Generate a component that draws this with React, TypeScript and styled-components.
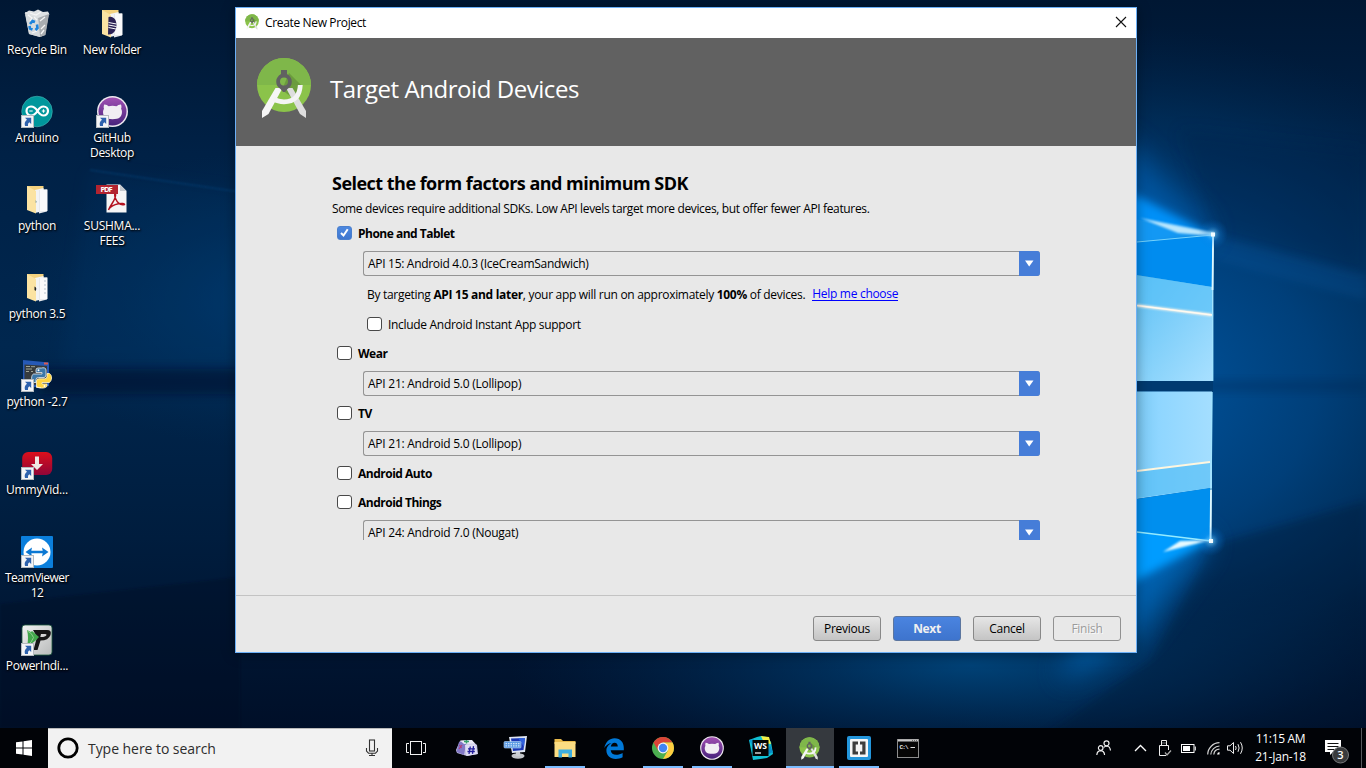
import React from "react";
import styled, { createGlobalStyle, css } from "styled-components";

const GlobalStyle = createGlobalStyle`
  html, body { margin: 0; padding: 0; }
  body {
    width: 1366px;
    height: 768px;
    overflow: hidden;
    font-family: "Open Sans", "Noto Sans", sans-serif;
    font-size: 12px;
    background: #00152f;
  }
  * { box-sizing: border-box; }
  svg { display: block; }
`;

/* ---------- Desktop ---------- */

const Screen = styled.div`
  position: relative;
  width: 1366px;
  height: 768px;
  display: flex;
  flex-direction: column;
  overflow: hidden;
`;

const WallpaperLayer = styled.div`
  position: absolute;
  inset: 0;
  z-index: 0;
`;

const Desktop = styled.main`
  position: relative;
  z-index: 1;
  flex: 1;
  padding-top: 7px;
`;

const IconGrid = styled.div`
  display: flex;
  width: 150px;
`;

const IconColumn = styled.div`
  display: flex;
  flex-direction: column;
  width: 75px;
`;

const Shortcut = styled.div`
  height: 88px;
  width: 74px;
  display: flex;
  flex-direction: column;
  align-items: center;
`;

const ShortcutIcon = styled.div`
  width: 34px;
  height: 35px;
`;

const ShortcutLabel = styled.span<{ $ls?: number }>`
  color: #fff;
  font-size: 12px;
  line-height: 15px;
  letter-spacing: ${(p) => p.$ls ?? -0.25}px;
  text-align: center;
  white-space: pre;
  text-shadow: 1px 1px 2px #000, 0 1px 2px rgba(0, 0, 0, 0.8);
`;

const Text = styled.span<{ $ls?: number }>`
  letter-spacing: ${(p) => p.$ls ?? -0.35}px;
  white-space: pre;
`;

/* ---------- Dialog ---------- */

const Dialog = styled.section`
  position: absolute;
  left: 235px;
  top: 7px;
  width: 902px;
  height: 646px;
  border: 1px solid #6cb0f7;
  background: #e8e8e8;
  display: flex;
  flex-direction: column;
  box-shadow: 0 1px 12px rgba(0, 0, 0, 0.35);
`;

const TitleBar = styled.div`
  height: 30px;
  background: #fff;
  display: flex;
  align-items: center;
  padding: 0 9px 2px 9px;
  color: #000;
`;

const TitleText = styled(Text)`
  flex: 1;
  margin-left: 6px;
`;

const Banner = styled.header`
  height: 108px;
  background: #616161;
  display: flex;
  align-items: flex-start;
  padding: 19px 0 0 20px;
`;

const BannerTitle = styled.h1`
  margin: 15px 0 0 18px;
  color: #fff;
  font-size: 24px;
  line-height: 34px;
  font-weight: 400;
  letter-spacing: -0.45px;
  white-space: pre;
`;

const Content = styled.div`
  height: 449px;
  padding: 26px 96px 0 96px;
  color: #000;
`;

const FormPane = styled.div`
  height: 368px;
  overflow: hidden;
`;

const Heading = styled.h2`
  margin: 0;
  font-size: 18px;
  font-weight: 700;
  line-height: 23px;
  letter-spacing: -0.52px;
  white-space: pre;
`;

const Subtitle = styled.p`
  margin: 5px 0 5px;
  line-height: 18px;
  letter-spacing: -0.35px;
  white-space: pre;
`;

const CheckRow = styled.label<{ $top?: number; $indent?: number; $bold?: boolean }>`
  display: flex;
  align-items: center;
  height: 20px;
  margin-top: ${(p) => p.$top ?? 0}px;
  padding-left: ${(p) => p.$indent ?? 5}px;
  font-weight: ${(p) => (p.$bold ? 700 : 400)};
  gap: 6px;
`;

const CheckBox = styled.span<{ $on?: boolean }>`
  width: 15px;
  height: 14px;
  border-radius: 3px;
  border: 1px solid ${(p) => (p.$on ? "#4a7fcd" : "#484848")};
  background: ${(p) => (p.$on ? "linear-gradient(#4c88e0, #3f77cf)" : "#fff")};
`;

const Select = styled.div`
  display: flex;
  justify-content: space-between;
  width: 677px;
  height: 25px;
  margin: 8px 0 0 31px;
  border: 1px solid #949494;
  border-right: 0;
  border-radius: 3px;
  padding-left: 4px;
  line-height: 24px;
`;

const SelectArrow = styled.span`
  width: 21px;
  height: 25px;
  margin-top: -1px;
  border-radius: 0 3px 3px 0;
  background: #467dd8;
  display: flex;
  align-items: center;
  padding-left: 6px;
`;

const Hint = styled.div`
  display: flex;
  align-items: flex-start;
  height: 20px;
  margin: 9px 0 0 35px;
  line-height: 19px;
`;

const HelpLink = styled.a`
  margin: 2px 0 0 7px;
  color: #0000ff;
  line-height: 14px;
  height: 14px;
  border-bottom: 1px solid #0000ff;
  white-space: pre;
`;

const Footer = styled.footer`
  flex: 1;
  border-top: 1px solid #c3c3c3;
  display: flex;
  justify-content: flex-end;
  gap: 12px;
  padding: 20px 15px 0 0;
`;

const Button = styled.button<{ $kind?: "primary" | "disabled" }>`
  width: 68px;
  height: 25px;
  padding: 0 0 1px;
  border: 1px solid #888;
  border-radius: 3px;
  font: 400 12px "Open Sans", "Noto Sans", sans-serif;
  color: #000;
  background: linear-gradient(#e6e6e6, #c4c4c4);
  ${(p) =>
    p.$kind === "primary" &&
    css`
      background: linear-gradient(#4a84e0, #3e74cd);
      border-color: #5c769f;
      color: #f0f0f0;
      font-weight: 700;
    `}
  ${(p) =>
    p.$kind === "disabled" &&
    css`
      background: transparent;
      border-color: #919191;
      color: #9b9b9b;
      text-shadow: 1px 1px 0 #fafafa;
    `}
`;

/* ---------- Taskbar ---------- */

const Taskbar = styled.nav`
  position: relative;
  z-index: 2;
  height: 40px;
  background: #010307;
  display: flex;
`;

const TaskCell = styled.div`
  width: 48px;
  height: 40px;
  display: flex;
  align-items: center;
  justify-content: center;
`;

const SearchBox = styled.div`
  width: 344px;
  height: 40px;
  background: #f2f2f2;
  border-top: 1px solid #b9b9b9;
  display: flex;
  align-items: center;
  padding: 0 13px 1px 8px;
`;

const SearchText = styled.span`
  flex: 1;
  margin-left: 8px;
  color: #2d2d2d;
  font-size: 14px;
  letter-spacing: -0.05px;
`;

const Apps = styled.div`
  display: flex;
  gap: 1px;
  margin-left: 3px;
`;

const AppCell = styled(TaskCell)<{ $state?: "open" | "active" }>`
  position: relative;
  padding-right: 1px;
  background: ${(p) => (p.$state === "active" ? "#35393e" : "transparent")};
  ${(p) =>
    p.$state &&
    css`
      &::after {
        content: "";
        position: absolute;
        bottom: 0;
        left: ${p.$state === "active" ? 0 : 4}px;
        right: ${p.$state === "active" ? 0 : 4}px;
        height: 2px;
        background: #7bbcff;
      }
    `}
`;

const Tray = styled.div`
  margin-left: auto;
  display: flex;
  align-items: center;
`;

const TrayItem = styled.div<{ $w: number }>`
  width: ${(p) => p.$w}px;
  display: flex;
  justify-content: center;
`;

const Clock = styled.div`
  width: 66px;
  display: flex;
  flex-direction: column;
  align-items: center;
  color: #fff;
  line-height: 18px;
  padding-left: 1px;
`;

const ShowDesktop = styled.div`
  width: 5px;
  height: 40px;
  border-left: 1px solid #55585c;
`;

/* ---------- Drawings ---------- */

const Wallpaper = () => (
  <svg width="1366" height="768" viewBox="0 0 1366 768">
    <defs>
      <linearGradient id="wBase" x1="0" y1="0" x2="0" y2="1">
        <stop offset="0" stopColor="#001733" />
        <stop offset="0.2" stopColor="#002146" />
        <stop offset="0.45" stopColor="#00274f" />
        <stop offset="0.7" stopColor="#001d3e" />
        <stop offset="0.95" stopColor="#000f28" />
      </linearGradient>
      <radialGradient id="wGlow" gradientUnits="userSpaceOnUse" cx="0" cy="0" r="1" gradientTransform="translate(1110 385) scale(460 360)">
        <stop offset="0" stopColor="#0058a5" />
        <stop offset="0.45" stopColor="#004482" stopOpacity="0.85" />
        <stop offset="0.75" stopColor="#003768" stopOpacity="0.5" />
        <stop offset="1" stopColor="#002850" stopOpacity="0" />
      </radialGradient>
      <radialGradient id="wLeft" gradientUnits="userSpaceOnUse" cx="0" cy="0" r="1" gradientTransform="translate(280 300) scale(270 150)">
        <stop offset="0" stopColor="#003e74" stopOpacity="0.8" />
        <stop offset="1" stopColor="#00305c" stopOpacity="0" />
      </radialGradient>
      <radialGradient id="wBottom" gradientUnits="userSpaceOnUse" cx="0" cy="0" r="1" gradientTransform="translate(970 665) scale(460 120)">
        <stop offset="0" stopColor="#004880" stopOpacity="0.85" />
        <stop offset="1" stopColor="#003060" stopOpacity="0" />
      </radialGradient>
      <linearGradient id="paneTop" x1="0" y1="0" x2="1" y2="1">
        <stop offset="0" stopColor="#5cc0f5" />
        <stop offset="1" stopColor="#a8e0ff" />
      </linearGradient>
      <linearGradient id="paneLow" x1="0" y1="0" x2="1" y2="0">
        <stop offset="0" stopColor="#74c6f2" />
        <stop offset="0.35" stopColor="#8fd6ff" />
        <stop offset="1" stopColor="#a4deff" />
      </linearGradient>
      <radialGradient id="flare">
        <stop offset="0" stopColor="#dff6ff" stopOpacity="0.9" />
        <stop offset="0.2" stopColor="#6cc9ff" stopOpacity="0.5" />
        <stop offset="0.5" stopColor="#1890f0" stopOpacity="0.25" />
        <stop offset="1" stopColor="#0078e0" stopOpacity="0" />
      </radialGradient>
      <filter id="b1" x="-50%" y="-50%" width="200%" height="200%"><feGaussianBlur stdDeviation="1.2" /></filter>
      <filter id="b4" x="-50%" y="-50%" width="200%" height="200%"><feGaussianBlur stdDeviation="4" /></filter>
      <filter id="b8" x="-50%" y="-50%" width="200%" height="200%"><feGaussianBlur stdDeviation="8" /></filter>
      <filter id="b14" x="-50%" y="-50%" width="200%" height="200%"><feGaussianBlur stdDeviation="14" /></filter>
    </defs>
    <rect width="1366" height="768" fill="url(#wBase)" />
    <rect width="700" height="768" fill="url(#wLeft)" />
    <rect width="1366" height="768" fill="url(#wGlow)" />
    <rect x="400" y="540" width="966" height="228" fill="url(#wBottom)" />
    <path d="M90 170 L240 192 V366 H60 Z" fill="#003c74" opacity="0.15" filter="url(#b8)" />
    <path d="M90 170 L240 192" stroke="#0a4f8c" strokeWidth="1.500" opacity="0.4" filter="url(#b1)" />
    <path d="M40 369 H240 V394 H40 Z" fill="#001029" opacity="0.5" filter="url(#b4)" />
    <path d="M60 597 L240 577 V728 H0 V604 Z" fill="#000d24" opacity="0.35" filter="url(#b1)" />
    <path d="M1213 234 L1366 275 V150 L1180 130 Z" fill="#001f42" opacity="0.28" filter="url(#b8)" />
    <path d="M1213 235 L1366 275 V300 L1213 260 Z" fill="#0a5ca5" opacity="0.22" filter="url(#b4)" />
    <path d="M1211 545 L1366 501 V768 H1000 L1150 660 Z" fill="#001630" opacity="0.35" filter="url(#b4)" />
    <path d="M1137 380 H1366 V392 H1137 Z" fill="#00234a" opacity="0.25" filter="url(#b4)" />
    <path d="M1060 100 L1137 150 L1213 234 L1137 250 Z" fill="#0068c0" opacity="0.6" filter="url(#b14)" />
    <path d="M1060 680 L1137 640 L1211 541 L1137 520 Z" fill="#0078d4" opacity="0.65" filter="url(#b14)" />
    <path d="M1080 175 L1137 196 L1211 234 L1137 250 Z" fill="#0090f8" filter="url(#b4)" />
    <path d="M1080 630 L1137 580 L1210 541 L1137 520 Z" fill="#009cff" filter="url(#b4)" />
    <path d="M1130 242 L1212 235 V288 L1130 274 Z" fill="#008cef" />
    <path d="M1130 218 L1212 235 L1130 243 Z" fill="#1f9ff2" opacity="0.6" />
    <path d="M1130 274 L1212 287 V381 H1130 Z" fill="url(#paneTop)" />
    <path d="M1130 274 L1212 287 V314 L1130 304 Z" fill="#55bff8" opacity="0.6" />
    <path d="M1137 305.500 L1212 315" stroke="#fff5e8" strokeWidth="2.500" filter="url(#b1)" />
    <path d="M1137 305.500 L1212 315" stroke="#fffaf0" strokeWidth="1.500" />
    <path d="M1137 242 L1213 235" stroke="#8ee2ff" strokeWidth="1" opacity="0.8" />
    <path d="M1140 218 L1213 232.500 V236 L1178 233 Z" fill="#d6f4ff" opacity="0.85" filter="url(#b1)" />
    <rect x="1130" y="381" width="83" height="10.500" fill="#003a70" />
    <path d="M1130 391.500 H1212 V488 L1130 500 Z" fill="url(#paneLow)" />
    <path d="M1130 471 L1210 462 V488 L1130 499 Z" fill="#4dbaf5" opacity="0.6" />
    <path d="M1130 500 L1210 488 V541 L1130 531 Z" fill="#008fee" />
    <path d="M1137 471 L1210 462" stroke="#fff6df" strokeWidth="2" />
    <path d="M1137 532 L1211 541" stroke="#94ebff" strokeWidth="1.300" />
    <path d="M1163 552 L1211 540 L1180 541 Z" fill="#e6faff" filter="url(#b1)" />
    <path d="M1212.700 234 V381 M1212 392 L1210.500 541" stroke="#a2e4ff" strokeWidth="1.400" />
    <path d="M1213.200 234 L1212.500 290 M1210.500 541 L1211 490" stroke="#dff8ff" strokeWidth="1.800" />
    <circle cx="1213" cy="234" r="15" fill="url(#flare)" />
    <circle cx="1211" cy="541" r="15" fill="url(#flare)" />
    <rect x="1211" y="232.500" width="4" height="4" fill="#f2fcff" />
    <rect x="1209" y="539" width="4" height="4" fill="#f2fcff" />
  </svg>
);

const LinkArrow = () => (
  <g>
    <rect x="1.500" y="20.500" width="12" height="12" fill="#f4f5f7" stroke="#b5babf" />
    <path d="M5 22.800 H11.200 V29 L9.300 27.200 Q7.500 28.300 8 31 H5 Q3.800 27 7 24.800 Z" fill="#2e62ad" />
  </g>
);

const IconFrame = ({ children }: { children: React.ReactNode }) => (
  <svg width="34" height="35" viewBox="0 0 34 35">{children}</svg>
);

const RecycleBinIcon = () => (
  <IconFrame>
    <path d="M5 5 L29 6 L25 28 L20 30 L9 27 Z" fill="#c9cdd0" />
    <path d="M4.500 6.500 L9 3.500 L14 4.500 L18 2.500 L23 5 L28 4.500 L29.500 7.500 L18 12 Z" fill="#dfe2e4" />
    <path d="M18 11 L29 7 L25.500 28 L20 30 Z" fill="#a9adb1" />
    <path d="M5 7 L18 11 L20 30 L9 27 Z" fill="#d6dadc" />
    <path d="M8 8 L12 11 L10 14 M14 10 L17 13 M12 26 L17 24 M20 14 L25 10 M21 22 L25 18 M21 27 L24 23 M10 6 L16 8 L21 5" stroke="#f6f6f6" strokeWidth="1.300" fill="none" />
    <path d="M10 17 L12.500 14 L15 15 M17 17.500 L17.500 21 L15.500 23 M12.500 22.500 L10 21.500 L9.500 19" fill="none" stroke="#1c83dc" strokeWidth="2.600" />
  </IconFrame>
);

const Folder = ({ kind }: { kind: "eclipse" | "plain" | "dot" }) => (
  <IconFrame>
    <path d="M7 3 H23.500 V27 H7 Z" fill="#f4d27f" />
    <path d="M15 7 L23.500 5 V28 L15 30 Z" fill="#f2f3f5" />
    <path d="M19 7 L27 6.500 V28.500 L19 30.500 Z" fill="#e6e8ec" />
    <path d="M20 6.500 H27.500 V28 H20 Z" fill="#fafafb" />
    <path d="M7 3 L16 8 V30.500 L7 27 Z" fill="#fbe3a2" />
    {kind === "eclipse" && (
      <>
        <path d="M13.500 10 C18.500 8.500 21.500 13 21.500 18 C21.500 23 18.500 28 13 27.500 Z" fill="#2c2255" />
        <path d="M13.500 15.500 L21.500 17 M13.500 18 L21.500 19.500 M13.500 20.500 L21 22" stroke="#fff" strokeWidth="1" />
      </>
    )}
    {kind === "plain" && <path d="M15.500 17 L17 19 L15.500 20 Z" fill="#8fa5a0" />}
    {kind === "dot" && <path d="M14.500 15.500 Q17.500 17 15.500 20 L14.500 19 Z" fill="#222" />}
    {kind === "dot" && <path d="M25 9 V25" stroke="#b6c1cc" strokeDasharray="2 2" />}
  </IconFrame>
);

const ArduinoIcon = () => (
  <IconFrame>
    <circle cx="17" cy="16.500" r="15.300" fill="#00979c" stroke="#4cb5b4" strokeWidth="0.600" />
    <path d="M17.500 16 C15 12 13 11.500 11 11.500 A4.400 4.400 0 0 0 11 20.500 C13.500 20.500 15.500 19 17.500 16 C19.500 12.500 21.500 11.500 23.500 11.500 A4.400 4.400 0 0 1 23.500 20.500 C21 20.500 19.500 19 17.500 16 Z" fill="none" stroke="#fff" strokeWidth="2.200" />
    <path d="M9.300 16 H12.700 M21.800 16 H25.200 M23.500 14.300 V17.700" stroke="#fff" strokeWidth="1.200" />
    <LinkArrow />
  </IconFrame>
);

const CatHead = () => (
  <path d="M9.200 9.500 C11 9.300 12.700 10.400 13.600 11.200 Q17.500 10.400 21.500 11.200 C22.600 10.400 24.300 9.300 26 9.500 C26.700 11.500 26.500 12.700 26.100 13.700 C28 16.500 27 22.800 22 23.700 Q17.500 24.600 13 23.700 C8 22.800 7 16.500 9 13.700 C8.600 12.700 8.500 11.500 9.200 9.500 Z" fill="#f1eef3" />
);

const GithubIcon = ({ link, size = 34 }: { link?: boolean; size?: number }) => (
  <svg width={size} height={link ? 35 : size} viewBox={link ? "0 0 34 35" : "0.5 -0.5 34 34"}>
    <defs>
      <linearGradient id="ghp" x1="0" y1="0" x2="0" y2="1">
        <stop offset="0" stopColor="#a04fb2" />
        <stop offset="1" stopColor="#47237c" />
      </linearGradient>
    </defs>
    <circle cx="17.500" cy="16.500" r="15.500" fill="#eee9f0" />
    <circle cx="17.500" cy="16.500" r="14" fill="url(#ghp)" />
    <CatHead />
    {link && <LinkArrow />}
  </svg>
);

const PdfIcon = () => (
  <IconFrame>
    <path d="M11.500 1.500 H25 L31.500 8 V29.500 H11.500 Z" fill="#f5f5f5" />
    <path d="M25 1.500 V8 H31.500 Z" fill="#c5c9ce" />
    <path d="M13.500 27 C16.500 20 21.500 16 20.500 11 C20 9.500 19 12 20.500 15.500 C22.500 20 26 22.500 29.500 21.500 C30 19.500 18 20 13.500 26.500" fill="none" stroke="#b3121f" strokeWidth="1.500" />
    <rect x="1" y="2" width="22" height="9" fill="#b22430" />
    <text x="5.500" y="9.300" fontSize="7.500" fontWeight="700" fill="#fff" fontFamily="Open Sans, sans-serif" textLength="12">PDF</text>
  </IconFrame>
);

const PythonIcon = () => (
  <IconFrame>
    <path d="M3 1 L29 3.500 V27 L3 29 Z" fill="#2659b6" />
    <path d="M4.500 5.500 L27 7 V25 L4.500 26.500 Z" fill="#373b3d" />
    <path d="M6 7.500 H10 M11 7.700 H15 M6 10 H12 M6 12.500 H9 M11 12.500 H13" stroke="#a1a596" strokeWidth="1" />
    <path d="M24 4.500 H28" stroke="#db5b51" strokeWidth="2" />
    <path d="M21.500 9 H18 Q16 9 16 11 V13.500 H22 V15 H13.500 C11 16 11 22 13.500 23.500 H16 V20.500 Q16 18.500 18.500 18.500 H24 Q26 18.500 26 16 V11 C26 8.500 23 8.500 21.500 9 Z" fill="#3b77a8" stroke="#e9eef3" strokeWidth="0.800" />
    <path d="M21 28.500 H16.500 V22 Q16.500 19.800 19 19.800 H24.500 Q27 19.800 27 17.500 V14.500 H29.500 C32.500 16.500 32 21.500 29.500 23.500 H22 V25 H27 V27 C26.500 29.800 17 29.800 16.500 27" fill="#ffd441" stroke="#fff7d6" strokeWidth="0.800" />
    <circle cx="18.500" cy="11.300" r="1" fill="#fff" />
    <circle cx="24.500" cy="26.900" r="1" fill="#fff" />
    <LinkArrow />
  </IconFrame>
);

const UmmyIcon = () => (
  <IconFrame>
    <defs>
      <linearGradient id="um" x1="0" y1="0" x2="0" y2="1">
        <stop offset="0" stopColor="#db101b" />
        <stop offset="1" stopColor="#8f0538" />
      </linearGradient>
    </defs>
    <rect x="2.200" y="5" width="30" height="23" rx="6" fill="url(#um)" />
    <path d="M15 9.500 H19 V17 H23 L17 23 L11 17 H15 Z" fill="#efe9e2" />
    <LinkArrow />
  </IconFrame>
);

const TeamViewerIcon = () => (
  <IconFrame>
    <rect x="1" y="1" width="32" height="32" rx="1" fill="#0b7fdc" />
    <circle cx="17" cy="17" r="13.500" fill="#fff" />
    <path d="M5.500 17 L12 12.500 L11.300 15.700 H22.700 L22 12.500 L28.500 17 L22 21.500 L22.700 18.300 H11.300 L12 21.500 Z" fill="#0b78d3" />
    <LinkArrow />
  </IconFrame>
);

const PowerIcon = () => (
  <IconFrame>
    <defs>
      <linearGradient id="pi" x1="0" y1="0" x2="1" y2="1">
        <stop offset="0" stopColor="#f2f2f2" />
        <stop offset="1" stopColor="#b9bbbb" />
      </linearGradient>
    </defs>
    <rect x="2" y="2" width="30" height="30" rx="3" fill="url(#pi)" stroke="#1e5a3d" strokeWidth="0.800" />
    <path d="M13 7 H27 Q32 7 30.500 12 Q28.500 17.500 20.500 17.500 L17.500 27 H13.500 L17 14 Z M21 11 L20.300 14 Q25.500 14.200 26.500 12 Q26.700 11 25 11 Z" fill="#161616" fillRule="evenodd" />
    <path d="M7 7 L11 9 L12 8 L19 14 Q14 20 7 23 Q9 15 7 7 Z" fill="#42a84b" />
    <path d="M7.500 8 Q12 10 13.500 14.500 Q12 19 7.500 22.500" fill="none" stroke="#8ed08f" />
    <LinkArrow />
  </IconFrame>
);

const StudioIcon = ({ w, h }: { w: number; h: number }) => (
  <svg width={w} height={h} viewBox="0 0 56 62" preserveAspectRatio="none">
    <defs>
      <clipPath id="studioDisc"><circle cx="28" cy="28" r="27" /></clipPath>
    </defs>
    <circle cx="28" cy="28" r="27" fill="#8bc34a" />
    <g clipPath="url(#studioDisc)">
      <rect width="56" height="28" fill="#7fb74a" />
      <path d="M33 16 L46 29 L38 42 L26 33 Z" fill="#638f38" opacity="0.7" />
    </g>
    <path d="M19.500 31 H26.500 L12.500 57 L6 61 V54 Z" fill="#f6f6f6" />
    <path d="M30 31 H36.500 L50 54 V61 L44 57 Z" fill="#dedede" />
    <path d="M44.300 28 Q43.500 44.800 28 44.800 Q22 44.800 17.500 42" fill="none" stroke="#f4f4f4" strokeWidth="4.800" />
    <path d="M25 13 H31 V17 Q35.800 20 35.800 24.500 Q35.800 29.500 31.500 32 L29 35 H27 L24.500 32 Q20.200 29.500 20.200 24.500 Q20.200 20 25 17 Z M28 20.500 A4 4 0 1 0 28 28.500 A4 4 0 1 0 28 20.500 Z" fill="#616161" fillRule="evenodd" />
  </svg>
);

const CloseIcon = () => (
  <svg width="12" height="12" viewBox="0 0 12 12">
    <path d="M1 1 L11 11 M11 1 L1 11" stroke="#111" strokeWidth="1.100" />
  </svg>
);

const Arrow = () => (
  <svg width="9" height="7" viewBox="0 0 9 7"><path d="M0 0.500 H8.500 L4.200 6.500 Z" fill="#fff" /></svg>
);

const Tick = () => (
  <svg width="13" height="12" viewBox="0 0 13 12"><path d="M3 6 L5.500 8.500 L9.700 2.200" fill="none" stroke="#fff" strokeWidth="2" /></svg>
);

const StartIcon = () => (
  <svg width="16" height="16" viewBox="0 0 16 16">
    <path d="M0 2.300 L6.500 1.400 V7.500 H0 Z M7.500 1.200 L16 0 V7.500 H7.500 Z M0 8.500 H6.500 V14.600 L0 13.700 Z M7.500 8.500 H16 V16 L7.500 14.800 Z" fill="#fff" />
  </svg>
);

const CortanaIcon = () => (
  <svg width="24" height="24" viewBox="0 0 24 24"><circle cx="12" cy="12" r="9.200" fill="none" stroke="#000" strokeWidth="2.800" /></svg>
);

const MicIcon = () => (
  <svg width="14" height="18" viewBox="0 0 14 18" fill="none" stroke="#333" strokeWidth="1.100">
    <rect x="4.500" y="1" width="5" height="11" />
    <path d="M1.500 9 V12 L3.500 14.200 H10.500 L12.500 12 V9 M7 14.200 V16.500 M4 16.500 H10" />
  </svg>
);

const TaskViewIcon = () => (
  <svg width="20" height="14" viewBox="0 0 20 14" fill="none" stroke="#f2f2f2">
    <rect x="4.500" y="0.500" width="11" height="13" />
    <path d="M3 2.500 H0.500 V11.500 H3 M17 2.500 H19.500 V11.500 H17" />
  </svg>
);

const HashCubeIcon = () => (
  <svg width="24" height="24" viewBox="0 0 24 24">
    <path d="M5 5 L16 4 L22 9 L23 18 L12 20 L2 17 L1 14 Z" fill="#c7c4e3" />
    <path d="M4 6 L8 5 L11 8 L9 19 L1.500 16 Z" fill="#8279c6" />
    <path d="M5 4.500 L17 4 L20 7.500 L9 8 Z" fill="#eceaf7" />
    <path d="M10 9 L20 8 L22.500 18 L11.500 20 Z" fill="#dedcf2" />
    <path d="M15.300 10.500 L14 18 M18.500 10.200 L17.500 17.800 M13 12.800 H20 M12.500 15.500 H19.800" stroke="#211c9a" strokeWidth="1.300" />
    <path d="M9 5.500 H14 M11.500 4 V7.500" stroke="#33a06b" strokeWidth="1.500" />
    <path d="M4.500 9 L6.500 12 M7 9 L4 13" stroke="#b23d76" strokeWidth="1.200" />
  </svg>
);

const RemoteIcon = () => (
  <svg width="26" height="24" viewBox="0 0 26 24">
    <path d="M6 1 L24 0 L22 16 L9 17 Z" fill="#dfe6f3" />
    <path d="M8 2.500 L22 2 L20.500 14 L10 15 Z" fill="#1a36b4" />
    <path d="M15 2 L22 2 L21 11 Z" fill="#2f60dc" />
    <ellipse cx="15" cy="20" rx="6.500" ry="2.700" fill="#c2c5ca" />
    <path d="M13 16 H17 V20 H13 Z" fill="#ccd0d5" />
    <rect x="1" y="5.500" width="17" height="6.500" rx="1" fill="#5c9be4" stroke="#bcd8f8" strokeWidth="0.600" />
    <path d="M2.500 7.700 H16.500 M2.500 9.900 H16.500" stroke="#e9f3fd" strokeDasharray="1.500 1" />
  </svg>
);

const ExplorerIcon = () => (
  <svg width="22" height="19" viewBox="0 0 22 19">
    <path d="M0.500 0 H7 L9 2 H21.500 V5 H0.500 Z" fill="#e9bb4c" />
    <rect x="0.500" y="3" width="21" height="15" fill="#fbdd82" />
    <path d="M4.500 18.500 V10.500 H18 V18.500 H14.500 V14.500 H8 V18.500 Z" fill="#3daee0" />
  </svg>
);

const EdgeIcon = () => (
  <svg width="20" height="21" viewBox="0 0 20 21">
    <path d="M0.300 10 C1.500 3.800 5.500 0.200 10.600 0.200 C16.800 0.200 19.800 4.700 19.800 9.800 V12.200 H6.700 C7 15.300 9.200 16.800 12.300 16.800 C14.500 16.800 16.800 16.200 18.600 15 V19.200 C16.600 20.400 14.200 20.900 11.700 20.900 C6 20.900 2.400 17.400 2.400 12.600 C2.400 9 4.800 6.300 7.800 5 C4.500 5.300 1.700 7.500 0.300 10 Z M6.800 8.500 H13.800 C13.700 6.300 12.700 4.800 10.600 4.800 C8.700 4.800 7.200 6.400 6.800 8.500 Z" fill="#0078d7" fillRule="evenodd" />
  </svg>
);

const ChromeIcon = () => (
  <svg width="22" height="22" viewBox="0 0 22 22">
    <circle cx="11" cy="11" r="11" fill="#4caf50" />
    <path d="M1.500 5.500 A11 11 0 0 1 20.500 5.500 H11 L6.200 13.700 Z" fill="#db4437" />
    <path d="M20.500 5.500 A11 11 0 0 1 11 22 L15.800 13.700 L11 5.500 Z" fill="#ffcd40" />
    <circle cx="11" cy="11" r="5.400" fill="#f5f5f5" />
    <circle cx="11" cy="11" r="4.200" fill="#4285f4" />
  </svg>
);

const WebStormIcon = () => (
  <svg width="24" height="24" viewBox="0 0 24 24">
    <path d="M0 4 L8 1 L12 0 L18 1 L22 6 L24 18 L18 22 L4 24 Z" fill="#10bfd2" />
    <path d="M12 0 L20 1 L22 8 L15 7 Z" fill="#f4ee45" />
    <path d="M0 4 L5 3 V12 Z" fill="#0b9ed1" />
    <path d="M16 20 L24 16 L21 9 Z" fill="#078ec9" />
    <rect x="3.500" y="4" width="16" height="16" fill="#050505" />
    <text x="5" y="13" fontSize="8.500" fontWeight="700" fill="#fff" fontFamily="Open Sans, sans-serif" textLength="13" lengthAdjust="spacingAndGlyphs">WS</text>
    <path d="M6 17 H12" stroke="#fff" strokeWidth="1.200" />
  </svg>
);

const BracketsIcon = () => (
  <svg width="24" height="24" viewBox="0 0 24 24">
    <rect width="24" height="24" rx="2" fill="#2396dc" />
    <rect x="3" y="3" width="18" height="18" rx="1" fill="#f5f5f5" />
    <path d="M5.500 5.500 H11 V8.500 H8.700 V15.500 H11 V18.500 H5.500 Z M18.500 5.500 H13 V8.500 H15.300 V15.500 H13 V18.500 H18.500 Z" fill="#3d3d3d" />
  </svg>
);

const ConsoleIcon = () => (
  <svg width="22" height="19" viewBox="0 0 22 19">
    <rect x="0.500" y="0.500" width="21" height="18" fill="#060606" stroke="#8d8d8d" />
    <path d="M1 1.500 H21" stroke="#c9c9c9" strokeWidth="2" />
    <path d="M15 1.500 H20" stroke="#6c6c6c" strokeDasharray="1 1" />
    <text x="2.500" y="9.500" fontSize="6" fill="#eee" fontFamily="Liberation Mono, monospace" fontWeight="700" textLength="9">C:\</text>
    <path d="M13.500 8.500 H18" stroke="#ddd" />
  </svg>
);

const PeopleIcon = () => (
  <svg width="16" height="16" viewBox="0 0 16 16" fill="none" stroke="#f0f0f0" strokeWidth="1.200">
    <circle cx="4.700" cy="8" r="2.300" />
    <path d="M0.800 15 Q1.200 10.800 4.700 10.600 Q8.200 10.800 8.600 15" />
    <circle cx="10.500" cy="3.300" r="2.500" />
    <path d="M7.800 7.500 Q9 6 10.500 6 Q14 6.200 14.500 10.500" />
  </svg>
);

const ChevronIcon = () => (
  <svg width="13" height="8" viewBox="0 0 13 8"><path d="M1 7 L6.500 1.500 L12 7" fill="none" stroke="#fff" strokeWidth="1.300" /></svg>
);

const UsbIcon = () => (
  <svg width="14" height="17" viewBox="0 0 14 17" fill="none" stroke="#eee">
    <path d="M3.500 5 V0.500 H8.500 V5 M8 15.500 H1.500 V5.500 H10.500 V10 M5 2.500 V3.500 M7 2.500 V3.500" />
    <path d="M7 12.500 L9 15 L13 10.500" stroke="#a9a9a9" strokeWidth="1.300" />
  </svg>
);

const BatteryIcon = () => (
  <svg width="15" height="9" viewBox="0 0 15 9">
    <rect x="0.500" y="0.500" width="12.500" height="8" fill="none" stroke="#fff" />
    <rect x="2" y="2" width="7" height="5" fill="#fff" />
    <path d="M14.300 2.500 V6.500" stroke="#fff" />
  </svg>
);

const WifiIcon = () => (
  <svg width="13" height="13" viewBox="0 0 13 13" fill="none" stroke="#d2d2d2" strokeWidth="1.200">
    <path d="M0.700 12.500 A12 12 0 0 1 12.500 0.700 M3.800 12.500 A9 9 0 0 1 12.500 4 M6.800 12.500 A6 6 0 0 1 12.500 7.200" />
    <path d="M10 12.500 A3 3 0 0 1 12.500 10 V12.500 Z" fill="#fff" stroke="none" />
  </svg>
);

const VolumeIcon = () => (
  <svg width="17" height="14" viewBox="0 0 17 14" fill="none" stroke="#ededed">
    <path d="M0.500 4.800 H3 L6.500 1.500 V12.500 L3 9.200 H0.500 Z" />
    <path d="M8.500 5 Q9.800 7 8.500 9 M11 3.200 Q13.200 7 11 10.800 M13.500 1.200 Q17 7 13.500 12.800" />
  </svg>
);

const NoticeIcon = () => (
  <svg width="26" height="32" viewBox="0 0 26 32">
    <path d="M1 8 H17 V20 H9 L6 23 V20 H1 Z" fill="#fff" />
    <path d="M3.500 11.500 H14.500 M3.500 14.500 H14.500 M3.500 17.500 H10" stroke="#111" strokeWidth="1.100" />
    <circle cx="16.500" cy="23" r="8" fill="#393b3d" stroke="#77797b" />
    <text x="16.500" y="27" fontSize="11" fill="#fff" textAnchor="middle" fontWeight="600" fontFamily="Open Sans, sans-serif">3</text>
  </svg>
);

/* ---------- Data ---------- */

type Item = { label: string; icon: React.ReactNode; ls?: number };

const columnOne: Item[] = [
  { label: "Recycle Bin", icon: <RecycleBinIcon /> },
  { label: "Arduino", icon: <ArduinoIcon />, ls: -0.2 },
  { label: "python", icon: <Folder kind="plain" /> },
  { label: "python 3.5", icon: <Folder kind="dot" />, ls: -0.3 },
  { label: "python -2.7", icon: <PythonIcon />, ls: -0.2 },
  { label: "UmmyVid...", icon: <UmmyIcon />, ls: -0.2 },
  { label: "TeamViewer\n12", icon: <TeamViewerIcon />, ls: -0.5 },
  { label: "PowerIndi...", icon: <PowerIcon />, ls: -0.3 },
];

const columnTwo: Item[] = [
  { label: "New folder", icon: <Folder kind="eclipse" />, ls: -0.3 },
  { label: "GitHub\nDesktop", icon: <GithubIcon link />, ls: -0.35 },
  { label: "SUSHMA...\nFEES", icon: <PdfIcon /> },
];

const apps: { name: string; icon: React.ReactNode; state?: "open" | "active" }[] = [
  { name: "cube", icon: <HashCubeIcon /> },
  { name: "remote", icon: <RemoteIcon /> },
  { name: "explorer", icon: <ExplorerIcon />, state: "open" },
  { name: "edge", icon: <EdgeIcon /> },
  { name: "chrome", icon: <ChromeIcon />, state: "open" },
  { name: "github", icon: <GithubIcon size={26} />, state: "open" },
  { name: "webstorm", icon: <WebStormIcon /> },
  { name: "studio", icon: <StudioIcon w={21} h={23} />, state: "active" },
  { name: "brackets", icon: <BracketsIcon />, state: "open" },
  { name: "console", icon: <ConsoleIcon /> },
];

const DesktopColumn = ({ items }: { items: Item[] }) => (
  <IconColumn>
    {items.map((it) => (
      <Shortcut key={it.label}>
        <ShortcutIcon>{it.icon}</ShortcutIcon>
        <ShortcutLabel $ls={it.ls}>{it.label}</ShortcutLabel>
      </Shortcut>
    ))}
  </IconColumn>
);

const ApiSelect = ({ value, ls }: { value: string; ls?: number }) => (
  <Select>
    <Text $ls={ls ?? -0.25}>{value}</Text>
    <SelectArrow><Arrow /></SelectArrow>
  </Select>
);

const Factor = ({ label, top, on }: { label: string; top?: number; on?: boolean }) => (
  <CheckRow $top={top} $bold>
    <CheckBox $on={on}>{on && <Tick />}</CheckBox>
    <Text $ls={-0.5}>{label}</Text>
  </CheckRow>
);

export default function App() {
  return (
    <Screen>
      <GlobalStyle />
      <WallpaperLayer><Wallpaper /></WallpaperLayer>
      <Desktop>
        <IconGrid>
          <DesktopColumn items={columnOne} />
          <DesktopColumn items={columnTwo} />
        </IconGrid>
        <Dialog>
          <TitleBar>
            <StudioIcon w={14} h={16} />
            <TitleText>Create New Project</TitleText>
            <CloseIcon />
          </TitleBar>
          <Banner>
            <StudioIcon w={56} h={62} />
            <BannerTitle>Target Android Devices</BannerTitle>
          </Banner>
          <Content>
            <FormPane>
              <Heading>Select the form factors and minimum SDK</Heading>
              <Subtitle>Some devices require additional SDKs. Low API levels target more devices, but offer fewer API features.</Subtitle>
              <Factor label="Phone and Tablet" on />
              <ApiSelect value="API 15: Android 4.0.3 (IceCreamSandwich)" ls={-0.3} />
              <Hint>
                <Text $ls={-0.3}>By targeting <b>API 15 and later</b>, your app will run on approximately <b>100%</b> of devices.</Text>
                <HelpLink><Text $ls={-0.3}>Help me choose</Text></HelpLink>
              </Hint>
              <CheckRow $top={9} $indent={35}>
                <CheckBox />
                <Text $ls={-0.31}>Include Android Instant App support</Text>
              </CheckRow>
              <Factor label="Wear" top={9} />
              <ApiSelect value="API 21: Android 5.0 (Lollipop)" />
              <Factor label="TV" top={7} />
              <ApiSelect value="API 21: Android 5.0 (Lollipop)" />
              <Factor label="Android Auto" top={7} />
              <Factor label="Android Things" top={9} />
              <ApiSelect value="API 24: Android 7.0 (Nougat)" />
            </FormPane>
          </Content>
          <Footer>
            <Button><Text $ls={-0.3}>Previous</Text></Button>
            <Button $kind="primary"><Text>Next</Text></Button>
            <Button><Text $ls={-0.3}>Cancel</Text></Button>
            <Button $kind="disabled"><Text $ls={-0.25}>Finish</Text></Button>
          </Footer>
        </Dialog>
      </Desktop>
      <Taskbar>
        <TaskCell><StartIcon /></TaskCell>
        <SearchBox>
          <CortanaIcon />
          <SearchText>Type here to search</SearchText>
          <MicIcon />
        </SearchBox>
        <TaskCell><TaskViewIcon /></TaskCell>
        <Apps>
          {apps.map((a) => (
            <AppCell key={a.name} $state={a.state}>{a.icon}</AppCell>
          ))}
        </Apps>
        <Tray>
          <TrayItem $w={42}><PeopleIcon /></TrayItem>
          <TrayItem $w={30}><ChevronIcon /></TrayItem>
          <TrayItem $w={20}><UsbIcon /></TrayItem>
          <TrayItem $w={27}><BatteryIcon /></TrayItem>
          <TrayItem $w={22}><WifiIcon /></TrayItem>
          <TrayItem $w={23}><VolumeIcon /></TrayItem>
          <Clock>
            <Text>11:15 AM</Text>
            <Text $ls={-0.2}>21-Jan-18</Text>
          </Clock>
          <TrayItem $w={48}><NoticeIcon /></TrayItem>
          <ShowDesktop />
        </Tray>
      </Taskbar>
    </Screen>
  );
}
